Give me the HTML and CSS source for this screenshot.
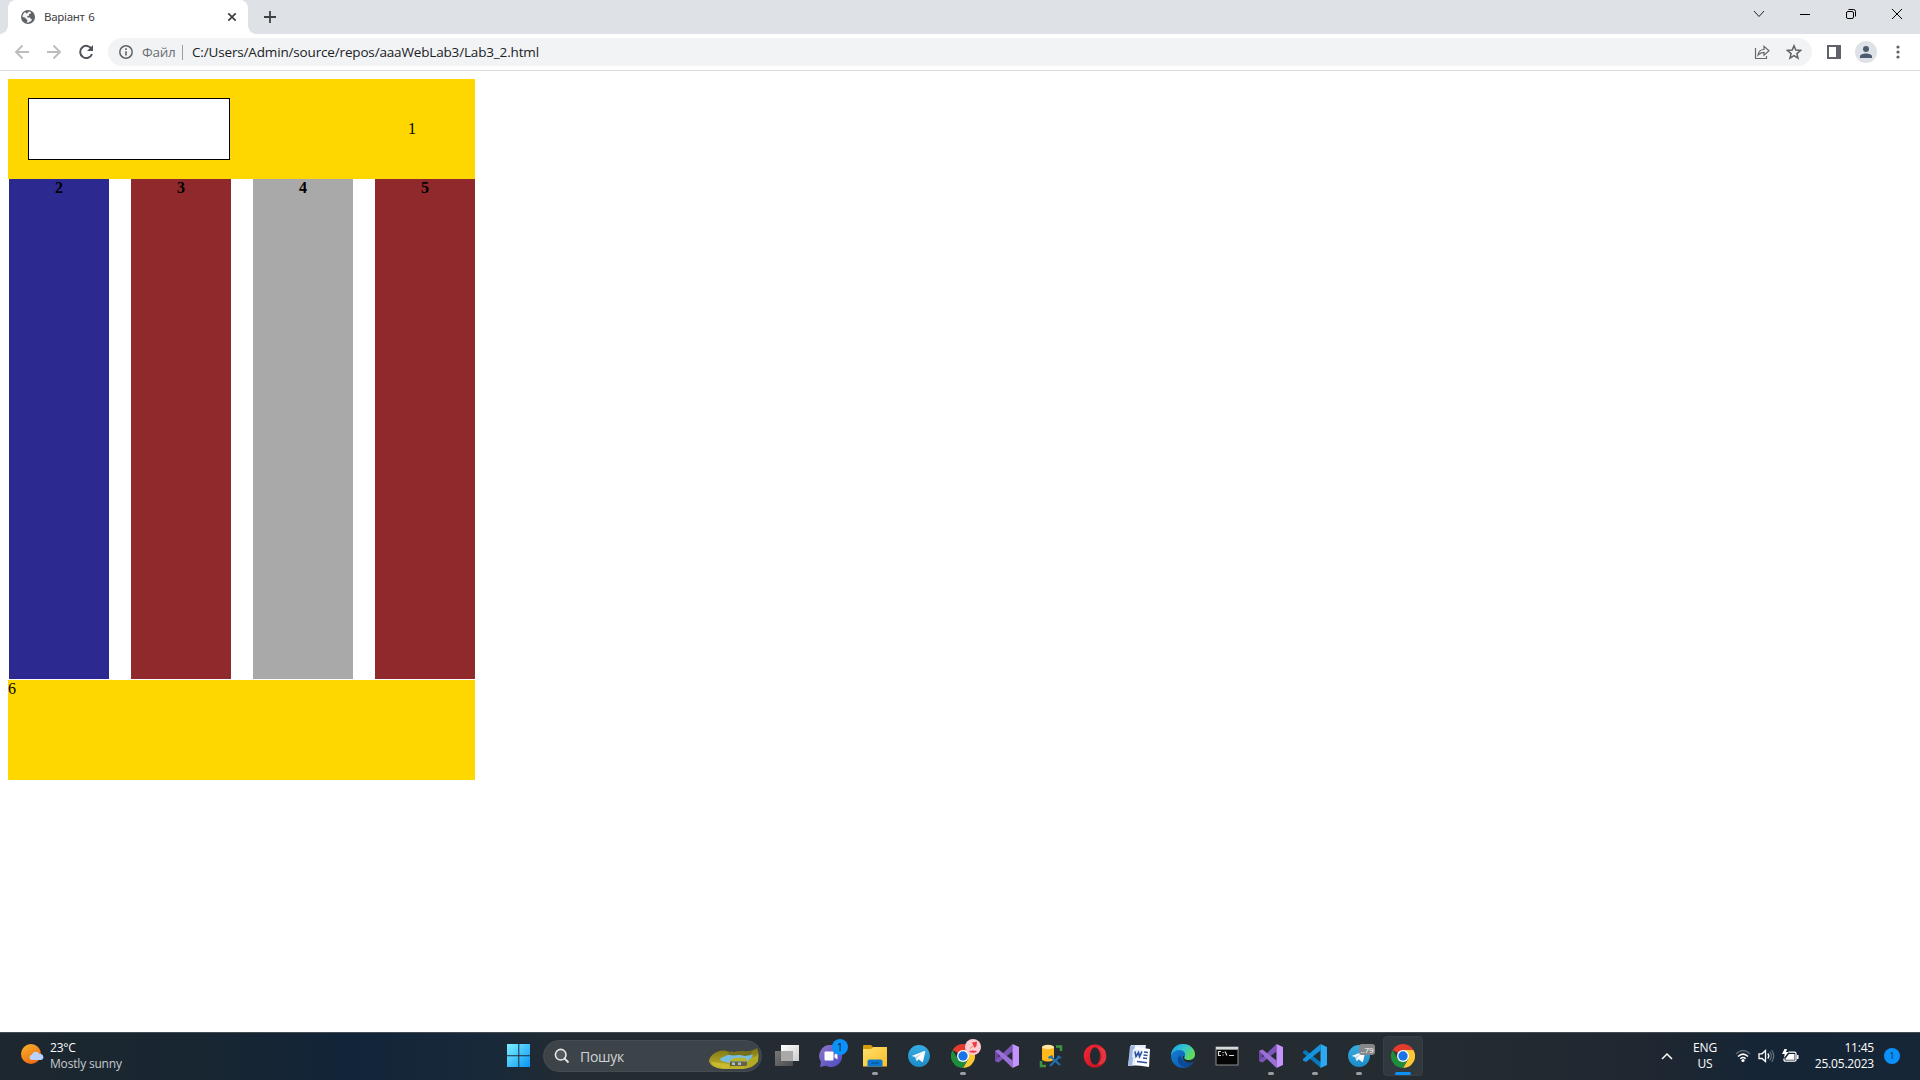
FILE: index.html
```html
<!DOCTYPE html>
<html lang="uk">
<head>
<meta charset="utf-8">
<title>Варіант 6</title>
<link rel="stylesheet" href="styles.css">
</head>
<body>
<svg class="defs" width="0" height="0" aria-hidden="true">
  <defs>
    <linearGradient id="win" x1="0" y1="0" x2="1" y2="1"><stop offset="0" stop-color="#7df0ff"/><stop offset="1" stop-color="#0795f5"/></linearGradient>
    <linearGradient id="sun" x1="0" y1="0" x2=".6" y2="1"><stop offset="0" stop-color="#f7b52c"/><stop offset="1" stop-color="#ef6a12"/></linearGradient>
    <linearGradient id="tg" x1="0" y1="0" x2="0" y2="1"><stop offset="0" stop-color="#36aee2"/><stop offset="1" stop-color="#1c8bc7"/></linearGradient>
    <linearGradient id="fold" x1="0" y1="0" x2="1" y2="1"><stop offset="0" stop-color="#ffdf6b"/><stop offset="1" stop-color="#f8bf2a"/></linearGradient>
    <linearGradient id="chat" x1="0" y1="0" x2="1" y2="1"><stop offset="0" stop-color="#8f76c9"/><stop offset="1" stop-color="#4c4bc4"/></linearGradient>
    <linearGradient id="op" x1="0" y1="0" x2="1" y2="1"><stop offset="0" stop-color="#ff2638"/><stop offset="1" stop-color="#b4101c"/></linearGradient>
    <linearGradient id="edgetop" x1="0" y1="0" x2="1" y2=".5"><stop offset="0" stop-color="#1b9de2"/><stop offset=".55" stop-color="#33c5d0"/><stop offset="1" stop-color="#62dc55"/></linearGradient>
    <linearGradient id="edgebot" x1="0" y1="0" x2="1" y2="1"><stop offset="0" stop-color="#1484dc"/><stop offset="1" stop-color="#0b4fa0"/></linearGradient>
    <linearGradient id="tvf" x1="0" y1="0" x2="1" y2="1"><stop offset="0" stop-color="#fff"/><stop offset="1" stop-color="#ccc"/></linearGradient>
    <linearGradient id="tvb" x1="0" y1="0" x2="1" y2="1"><stop offset="0" stop-color="#777"/><stop offset="1" stop-color="#4d4d4d"/></linearGradient>
    <linearGradient id="hill" x1="0" y1="0" x2="0" y2="1"><stop offset="0" stop-color="#7d7417"/><stop offset="1" stop-color="#c2b52a"/></linearGradient>
    <symbol id="chrome" viewBox="0 0 24 24">
      <path fill="#e33b2e" d="M12 12 1.6 6A12 12 0 0 1 22.4 6Z"/>
      <path fill="#fcc934" d="M12 12V6h10.4A12 12 0 0 1 12 24l5.2-9Z"/>
      <path fill="#1e8e3e" d="M12 12 17.2 15 12 24A12 12 0 0 1 1.6 6l5.2 9Z"/>
      <circle cx="12" cy="12" r="6" fill="#fff"/><circle cx="12" cy="12" r="4.7" fill="#1a73e8"/>
    </symbol>
    <symbol id="vs" viewBox="0 0 24 24">
      <path fill="#6b46a3" d="M0 7 3.500 5.500v13L0 17Z"/>
      <path fill="#7c55b8" d="M17.500 0v7.500L3.500 18.500 0 17Z"/>
      <path fill="#9a70d6" d="M0 7 3.500 5.500 17.500 16.500V24Z"/>
      <path fill="#c493fb" d="M17.500 0 24 3v18l-6.500 3Z"/>
    </symbol>
    <symbol id="telegram" viewBox="0 0 24 24">
      <circle cx="12" cy="12" r="10.900" fill="url(#tg)"/>
      <path fill="#fff" d="m4.700 11.900 12.600-4.900c.6-.2 1.100.2.900 1l-2.100 9.200c-.1.700-.6.900-1.200.5l-3.200-2.400-1.600 1.500c-.4.300-.7.100-.8-.4l-1-3.300-3.500-1.100Z"/>
      <path fill="#b5d8ed" d="m8.300 13.100 6.800-4.300-5.200 5.200-.3 2.800Z"/>
    </symbol>
  </defs>
</svg>

<header class="browser">
  <div class="tabstrip">
    <div class="tab">
      <svg class="globe" width="14" height="14" viewBox="0 0 14 14"><circle cx="7" cy="7" r="7" fill="#5f6368"/><path fill="#fff" d="M7.800 1.400c.8 0 1.500.3 2.100.7L9.700 3.500 8 4.300 7.800 5.900l-1.500.2.100 1.300h2.700l.7 1.500 1.300.4-.9 1.600-2.700 1.700-2-.1.900-1.500-.3-1.400-1.400-.8L4 7.400 1.500 7C1.400 5 2.700 3 4.400 2.100l.7 1.300 1.500-.4Z" opacity=".93"/></svg>
      <span class="tab-title">Варіант 6</span>
      <svg class="tab-close" width="10" height="10" viewBox="0 0 10 10"><path d="m1.300 1.300 7.400 7.400m0-7.400L1.300 8.700" stroke="#3c4043" stroke-width="1.700"/></svg>
    </div>
    <svg class="newtab" width="12" height="12" viewBox="0 0 12 12"><path d="M6 0v12M0 6h12" stroke="#3c4043" stroke-width="1.800"/></svg>
    <div class="window-buttons">
      <svg width="12" height="12" viewBox="0 0 12 12"><path d="m1 3 5 5.500L11 3" fill="none" stroke="#222"/></svg>
      <svg width="12" height="12" viewBox="0 0 12 12"><path d="M1 6.500h10" stroke="#000"/></svg>
      <svg width="12" height="12" viewBox="0 0 12 12"><rect x="1.500" y="3.500" width="7" height="7" rx="1.500" fill="none" stroke="#000"/><path d="M3.500 1.500h5q2 0 2 2v5" fill="none" stroke="#000"/></svg>
      <svg width="12" height="12" viewBox="0 0 12 12"><path d="m1 1 10 10m0-10L1 11" stroke="#000"/></svg>
    </div>
  </div>
  <div class="toolbar">
    <svg width="16" height="16" viewBox="0 0 16 16"><path d="M15 8H2.500M8.500 1.500 2 8l6.500 6.500" fill="none" stroke="#babcbe" stroke-width="1.800"/></svg>
    <svg width="16" height="16" viewBox="0 0 16 16"><path d="M1 8h12.500M7.500 1.500 14 8l-6.500 6.500" fill="none" stroke="#babcbe" stroke-width="1.800"/></svg>
    <svg width="16" height="16" viewBox="0 0 16 16"><path d="M13.600 5A6.100 6.100 0 1 0 14 10" fill="none" stroke="#505459" stroke-width="2"/><path d="M15 1v6H9Z" fill="#505459"/></svg>
    <div class="omnibox">
      <svg width="14" height="14" viewBox="0 0 14 14"><circle cx="7" cy="7" r="6.200" fill="none" stroke="#5f6368" stroke-width="1.500"/><path d="M7 6.200v4.300M7 3.300v1.600" stroke="#5f6368" stroke-width="1.600"/></svg>
      <span class="scheme">Файл</span>
      <span class="url">C:/Users/Admin/source/repos/aaaWebLab3/Lab3_2.html</span>
      <svg class="share" width="16" height="16" viewBox="0 0 16 16"><path d="M1.500 4v10.500h11V12M4 11c.6-4 3-5.500 6-5.500V2.300L15 6.800l-5 4.300V8.300c-2.500 0-4.200.7-6 2.700Z" fill="none" stroke="#666a6f" stroke-width="1.200"/></svg>
      <svg class="star" width="16" height="16" viewBox="0 0 16 16"><path d="m8 1.800 1.800 4.300 4.700.4-3.600 3.100 1.100 4.600-4-2.500-4 2.500 1.100-4.600-3.600-3.100 4.700-.4Z" fill="none" stroke="#5f6368" stroke-width="1.500"/></svg>
    </div>
    <svg class="panel" width="14" height="14" viewBox="0 0 14 14"><path fill="#5f6368" fill-rule="evenodd" d="M0 0h14v14H0ZM2 2v10h7V2Z"/></svg>
    <svg class="avatar" width="22" height="22" viewBox="0 0 22 22"><circle cx="11" cy="11" r="11" fill="#dee1e6"/><circle cx="11" cy="8" r="3" fill="#4d5a70"/><path fill="#4d5a70" d="M5 17v-1.500c0-4 12-4 12 0V17Z"/></svg>
    <svg class="dots" width="4" height="14" viewBox="0 0 4 14" fill="#5f6368"><circle cx="2" cy="2" r="1.600"/><circle cx="2" cy="7" r="1.600"/><circle cx="2" cy="12" r="1.600"/></svg>
  </div>
</header>

<main class="page">
  <div class="head"><div class="blank"></div><span class="one">1</span></div>
  <div class="columns">
    <div class="col blue">2</div><div class="col red">3</div><div class="col gray">4</div><div class="col red">5</div>
  </div>
  <div class="foot">6</div>
</main>

<footer class="taskbar">
  <div class="weather">
    <svg width="23" height="22" viewBox="0 0 23 22"><circle cx="10" cy="11" r="10" fill="url(#sun)"/><path fill="#b9d2fb" d="M10.500 17a2.700 2.700 0 0 1 .3-5.300 4.200 4.200 0 0 1 7.800-.6 3 3 0 0 1 1.400 5.900Z"/></svg>
    <div class="weather-text"><div>23°C</div><div class="cond">Mostly sunny</div></div>
  </div>
  <div class="apps">
    <svg class="start" width="24" height="24" viewBox="0 0 24 24"><path fill="url(#win)" d="M0 0h11.300v11.300H0ZM12.300 0H23v11.300H12.300ZM0 12.300h11.300V23H0ZM12.300 12.300H23V23H12.300Z"/></svg>
    <div class="search">
      <svg width="16" height="16" viewBox="0 0 16 16"><circle cx="6.700" cy="6.700" r="5.300" fill="#54595e" stroke="#e4e6e8" stroke-width="1.600"/><path d="m10.500 10.500 4 4" stroke="#e4e6e8" stroke-width="1.800"/></svg>
      <span>Пошук</span>
      <svg class="scene" width="50" height="22" viewBox="0 0 50 22">
        <path fill="url(#hill)" d="M0 13C1 7 7 3 14 2.500c4 0 6 2 10 2 4-1 8-1.500 12-1 4 0 9-1 12-3.500 2 4 2 9 1 13-4 6-10 8-18 8H14C5 20 1 17 0 13Z"/>
        <path fill="#74bde6" d="M11 11c3-3 6-2 8-4.500 4 1 6-1 9 0 5-1 10-1 15 0 2 2-1 4-4 6l-1 3H22c-3-2-10-1-11-4.500Z"/>
        <path fill="#77701a" d="m18 6 4-3 5 2 5-2 6 1 6-2-2 5-6 1-5-1-8 .500Z"/>
        <path fill="#c9bb30" d="M2 14c5 1 12 1 18 2v4h-7C7 19 3 17 2 14Z"/>
        <path fill="#bab52f" d="m24 10 12-.5 3 4H20Z"/>
        <path fill="#666044" d="M21 13.500h17V18H21Z"/><path fill="#a8c0c8" d="M23 14.500h3V17h-3zm6 0h3V17h-3z"/>
        <path fill="#b3ac22" d="M40 12c3-3 7-3 9-6v7c-3 4-7 6-13 7 2-3 3-6 4-8Z"/>
      </svg>
    </div>
    <div class="app"><svg width="24" height="24" viewBox="0 0 24 24"><path fill="url(#tvb)" d="M0 7h18v15H0Z"/><path fill="url(#tvf)" d="M6 1h18v16H6Z"/><path fill="#a9a9a9" d="M6 7h12v10H6Z"/></svg></div>
    <div class="app"><svg width="24" height="24" viewBox="0 0 24 24"><path fill="url(#chat)" d="M12 1a11 11 0 1 1-5 20.700L1 23l1-5A11 11 0 0 1 12 1Z"/><rect x="5.500" y="7.500" width="9" height="9" rx="1" fill="#fff"/><path fill="#fff" d="m15.500 10.500 3-2v7l-3-2Z"/></svg><span class="badge chat-badge">1</span></div>
    <div class="app running"><svg width="24" height="24" viewBox="0 0 24 24"><path fill="#d89a0b" d="M0 2q0-1 1-1h7l2 2-2 3H0Z"/><path fill="url(#fold)" d="M0 5h8l2-2h14v19.500H0Z"/><path fill="#0c78cd" d="M4.500 17.500q0-2 2-2h11q2 0 2 2v5h-15Z"/><path stroke="#075ba4" stroke-width="1.500" d="M8 19h8"/></svg></div>
    <div class="app"><svg width="24" height="24"><use href="#telegram"/></svg></div>
    <div class="app running"><svg width="24" height="24"><use href="#chrome"/></svg><svg class="profile" width="16" height="16" viewBox="0 0 16 16"><circle cx="8" cy="8" r="8" fill="#ffccd3"/><path fill="#e93b43" d="M4.500 12q3.500-.8 7 0v1.300q-3.500.8-7 0ZM7 3.500l5-1-.5 4.500L9.500 9Z"/><path stroke="#e8863f" stroke-width="1" d="m9 6-4 3.500"/></svg></div>
    <div class="app"><svg width="24" height="24"><use href="#vs"/></svg></div>
    <div class="app"><svg width="24" height="24" viewBox="0 0 24 24"><path fill="#ffb91b" d="M3 3h12v13q-6 3-12 0Z"/><ellipse cx="9" cy="3" rx="6" ry="2.200" fill="#ffe6a2"/><path d="M17 2.500h5V7M2 17v5h5" fill="none" stroke="#3d963f" stroke-width="2.500"/><path d="m12 13 9 8M20 13l-9 9M9.500 14l4-2m5 0 3.500 2" fill="none" stroke="#1c73b7" stroke-width="2"/></svg></div>
    <div class="app"><svg width="24" height="24" viewBox="0 0 24 24"><ellipse cx="12" cy="12" rx="11.300" ry="11.500" fill="url(#op)"/><ellipse cx="12" cy="12" rx="5" ry="8.800" fill="#222b32"/><path fill="#f34b50" d="M14 3.500c6 3 6 14 0 17 9 1 11-7 8-14-2-3-5-4-8-3Z" opacity=".6"/></svg></div>
    <div class="app"><svg width="24" height="24" viewBox="0 0 24 24"><path fill="#e7eefb" d="M4 1h15L16 21 1 22Z"/><path fill="#9db8e0" d="m3 2 5-1-3 20-4 1Z"/><path fill="#fff" d="m8 3 15 2-1 18-14-2Z"/><path fill="#e2eaf8" d="m6 5 10 1-2 9-9-2Z"/><path stroke="#234da0" stroke-width="1.500" fill="none" d="m8 7.500 1 5 2.500-4 1 4 2.500-5"/><path stroke="#304f9c" stroke-width="1.600" d="m17 8 4 .5M16.500 11l4 .5M16 14l4 .5M10 17.500l10 1.200"/></svg></div>
    <div class="app"><svg width="24" height="24" viewBox="0 0 24 24"><circle cx="12" cy="12" r="12" fill="url(#edgebot)"/><path fill="url(#edgetop)" d="M0 11C1 3 7 0 12 0c7 0 12 5 12 10 0 4-3 6-6.500 6-3 0-5-1-4-3 2-4-1-7-5-7-4 0-7 2-8.500 5Z"/><path fill="#0c4a96" d="M9 11c-5 4-1 12 6 12 3-.5 6-2 7-5-4 2-10 2-13-7Z"/><path fill="#222b32" d="M13.500 12c-1 2 0 4 4 4 3 0 5-.5 6.500-3-.2 2-.7 3.500-1.500 5C17 20 11 18 12 12Z"/></svg></div>
    <div class="app"><svg width="24" height="24" viewBox="0 0 24 24"><path fill="#8d9192" d="M.5 2.500h23v19H.5Z"/><path fill="#d7dadd" d="M1 3h22v2H1Z"/><path fill="#050505" d="M1.500 6h21v14.500h-21Z"/><path stroke="#ddd" stroke-width="1.200" fill="none" d="M6 7.500H3.500v4H6M8 8v1m0 1.500v1M10 7.500l2 4M14 11.500h5"/></svg></div>
    <div class="app running"><svg width="24" height="24"><use href="#vs"/></svg></div>
    <div class="app running"><svg width="24" height="24" viewBox="0 0 24 24"><path fill="#0878bd" d="M0 7.500 2.500 6 18 18.500V24L0 9Z"/><path fill="#1593dc" d="M17.500 0v6.500L3 18 0 16.500V15Z"/><path fill="#2ca9f2" d="M17.500 0 24 3v18l-6.500 3Z"/></svg></div>
    <div class="app running"><svg width="24" height="24"><use href="#telegram"/></svg><span class="badge count">..79</span></div>
    <div class="app active"><svg width="24" height="24"><use href="#chrome"/></svg></div>
  </div>
  <div class="tray">
    <svg class="chev" width="12" height="8" viewBox="0 0 12 8"><path d="m1 7 5-5 5 5" fill="none" stroke="#fff" stroke-width="1.500"/></svg>
    <div class="lang">ENG<br>US</div>
    <svg class="wifi" width="16" height="14" viewBox="0 0 16 14"><path d="M1 5q7-7 14 0" fill="none" stroke="#596570" stroke-width="1.400"/><path d="M3 7.500q5-4.700 10 0M5.300 9.800q2.700-2.500 5.400 0" fill="none" stroke="#fff" stroke-width="1.500"/><circle cx="8" cy="11.500" r="1.600" fill="#fff"/></svg>
    <svg class="sound" width="17" height="14" viewBox="0 0 17 14"><path d="M1 4.800h3L7.500 1.500v11L4 9.500H1Z" fill="none" stroke="#fff" stroke-width="1.300"/><path d="M9.800 4.500q2 2.500 0 5" fill="none" stroke="#fff" stroke-width="1.300"/><path d="M11.700 2.700q3.300 4.300 0 8.600M13.700 1q4 6 0 12" fill="none" stroke="#65717b" stroke-width="1.200"/></svg>
    <svg class="battery" width="17" height="14" viewBox="0 0 17 14"><path d="M6.500 3.200h6q1.500 0 1.500 1.500v6q0 1.500-1.500 1.500h-9Q2 12.200 2 10.700V9.500" fill="none" stroke="#fff" stroke-width="1.300"/><path fill="#fff" d="M7 5h5.500v5.700h-9V9.500ZM15 6h1.500v4H15ZM2.500 0H5L4 3h2.500L2 9l.7-4H0Z"/></svg>
    <div class="clock">11:45<br>25.05.2023</div>
    <span class="notify">1</span>
  </div>
</footer>
</body>
</html>
```
FILE: styles.css
```css
* { box-sizing: border-box; }
body {
  margin: 0;
  width: 1920px;
  height: 1080px;
  overflow: hidden;
  display: flex;
  flex-direction: column;
  background: #fff;
  font-family: "Open Sans", "Noto Sans", sans-serif;
}
svg { display: block; flex: none; }
.defs { position: absolute; }

.browser { height: 71px; border-bottom: 1px solid #dadbdd; }
.tabstrip { height: 34px; display: flex; align-items: center; background: #dee1e6; padding-left: 8px; }
.tab {
  width: 240px; height: 34px; display: flex; align-items: center;
  padding: 0 11px 0 13px; background: #fff; border-radius: 8px 8px 0 0; position: relative;
}
.tab::before, .tab::after { content: ""; position: absolute; bottom: 0; width: 8px; height: 8px; }
.tab::before { left: -8px; background: radial-gradient(circle at 0 0, transparent 7.5px, #fff 8px); }
.tab::after { right: -8px; background: radial-gradient(circle at 100% 0, transparent 7.5px, #fff 8px); }
.tab-title { margin-left: 9px; font: 11.5px/16px "Noto Sans", sans-serif; letter-spacing: -.3px; word-spacing: 1px; color: #3c4043; flex: 1; white-space: nowrap; }
.newtab { margin-left: 16px; }
.window-buttons { display: flex; margin-left: auto; gap: 34px; padding-right: 17px; padding-bottom: 6px; }
.toolbar { height: 36px; display: flex; align-items: center; padding-left: 14px; }
.toolbar > svg { margin-right: 16px; }
.omnibox { width: 1704px; height: 28px; border-radius: 14px; background: #f1f3f4; display: flex; align-items: center; padding: 0 10px 0 11px; margin-left: -2px; font-size: 13.5px; }
.scheme { margin-left: 9px; padding-right: 8px; width: 41px; line-height: 15px; border-right: 1px solid #9a9da1; color: #6b6f74; letter-spacing: -.3px; white-space: nowrap; }
.url { margin-left: 9px; color: #202124; letter-spacing: -.16px; }
.share { margin-left: auto; margin-right: 16px; }
.toolbar > .panel { margin: 0 14px 0 15px; }
.toolbar > .avatar { margin-right: 19px; }
.toolbar > .dots { margin: 0; }

.page { flex: 1; padding: 8px; font: 16px/18px "Liberation Serif", serif; color: #000; }
.head { width: 467px; height: 100px; background: gold; display: flex; align-items: center; padding: 0 59px 0 20px; justify-content: space-between; }
.blank { width: 202px; height: 62px; border: 1px solid #000; background: #fff; }
.columns { display: flex; gap: 22px; margin-left: 1px; margin-bottom: 1px; }
.col { width: 100px; height: 500px; text-align: center; font-weight: bold; }
.blue { background: #2c2990; }
.red { background: #90292b; }
.gray { background: #a9a9a9; }
.foot { width: 467px; height: 100px; background: gold; }

.taskbar { height: 48px; padding-bottom: 1px; display: flex; align-items: center; color: #fff; border-top: 1px solid #454d54; background: linear-gradient(90deg, #1d272e 0, #182632 200px, #122438 350px, #18293a 490px, #242b32 570px, #242b31 1440px, #202730 1640px, #152536 1760px, #172636 1920px); }
.weather { display: flex; align-items: center; padding: 0 0 1px 21px; width: 507px; }
.weather svg { margin-bottom: 3px; }
.weather-text { margin-left: 6px; font-size: 12px; line-height: 16px; letter-spacing: -.18px; }
.cond { color: #c6cbd0; }
.apps { display: flex; align-items: center; height: 46px; }
.start { margin-right: 12px; }
.search { width: 219px; height: 32px; border-radius: 16px; background: #3d4449; border: 1px solid #454c51; display: flex; align-items: center; padding: 0 2px 0 10px; margin-right: 5px; color: #d0d3d5; font-size: 14px; }
.search span { margin-left: 10px; letter-spacing: -.3px; }
.scene { margin-left: auto; margin-top: 5px; }
.app { width: 40px; height: 40px; margin-right: 4px; border-radius: 4px; display: flex; align-items: center; justify-content: center; position: relative; }
.running::after, .active::after { content: ""; position: absolute; bottom: 1px; left: 17px; width: 6px; height: 3px; border-radius: 2px; background: #9b9fa2; }
.active { background: #31383e; border: 1px solid #383f45; }
.active::after { width: 16px; left: 11px; bottom: 0; background: #0a91fa; }
.badge { position: absolute; font-size: 11px; text-align: center; }
.chat-badge { left: 21px; top: 3px; width: 16px; height: 16px; border-radius: 8px; background: #0a91fa; color: #101d2a; line-height: 16px; }
.profile { position: absolute; left: 22px; top: 3px; }
.count { left: 20px; top: 8px; width: 16px; height: 11px; border-radius: 3px; background: #858788; color: #fff; font-size: 8px; line-height: 11px; letter-spacing: -.1px; }
.tray { margin-left: auto; display: flex; align-items: center; font-size: 12px; line-height: 16px; letter-spacing: -.2px; padding: 0 20px 1px 0; }
.lang { width: 32px; text-align: center; margin: 0 10px 0 16px; }
.wifi { margin: 0 7px 0 4px; }
.battery { margin-left: 7px; }
.clock { width: 75px; text-align: right; white-space: nowrap; }
.notify { width: 16px; height: 16px; border-radius: 8px; background: #0a91fa; color: #15314a; font-size: 9px; text-align: center; margin-left: 10px; }
```
